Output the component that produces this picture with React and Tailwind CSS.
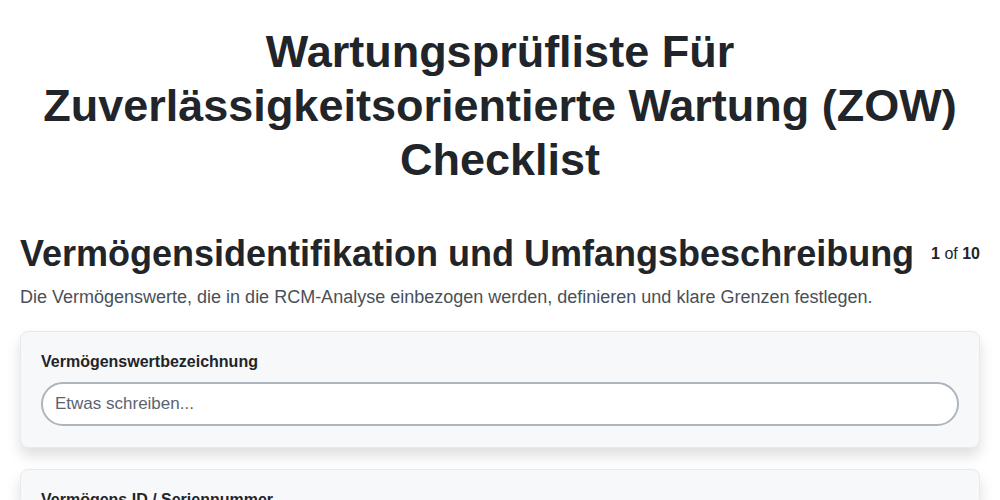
import React from 'react';

const fields = [
  { label: 'Vermögenswertbezeichnung' },
  { label: 'Vermögens ID / Seriennummer' },
];

const Field = ({ label }) => (
  <div className="bg-[#f7f8fa] border border-[#e7e9ee] rounded-lg shadow-[0_8px_14px_rgba(0,0,0,0.13)] px-5 pt-[18px] pb-[21px]">
    <label className="block text-base leading-6 font-bold text-[#212529] mb-2">{label}</label>
    <input
      type="text"
      placeholder="Etwas schreiben..."
      className="w-full h-[44px] rounded-[22px] border-2 border-[#adb5bd] bg-white px-3 text-[17px] text-[#212529] placeholder:text-[#5c6370] outline-none"
    />
  </div>
);

export default function App() {
  return (
    <div className="min-h-screen bg-white px-5 pt-[25px] pb-10 font-['Liberation_Sans',Arial,sans-serif] text-[#212529]">
      <h1 className="text-center text-[45px] leading-[1.2] font-bold">
        Wartungsprüfliste Für Zuverlässigkeitsorientierte Wartung (ZOW) Checklist
      </h1>

      <div className="mt-[45px] flex items-center justify-between gap-4">
        <h2 className="text-[36px] leading-[1.2] font-bold">
          Vermögensidentifikation und Umfangsbeschreibung
        </h2>
        <span className="text-base whitespace-nowrap">
          <b>1</b> of <b>10</b>
        </span>
      </div>
      <p className="mt-[9px] text-lg leading-[1.5] text-[#495057]">
        Die Vermögenswerte, die in die RCM-Analyse einbezogen werden, definieren und klare Grenzen festlegen.
      </p>

      <div className="mt-5 flex flex-col gap-[21px]">
        {fields.map((f) => (
          <Field key={f.label} label={f.label} />
        ))}
      </div>
    </div>
  );
}
